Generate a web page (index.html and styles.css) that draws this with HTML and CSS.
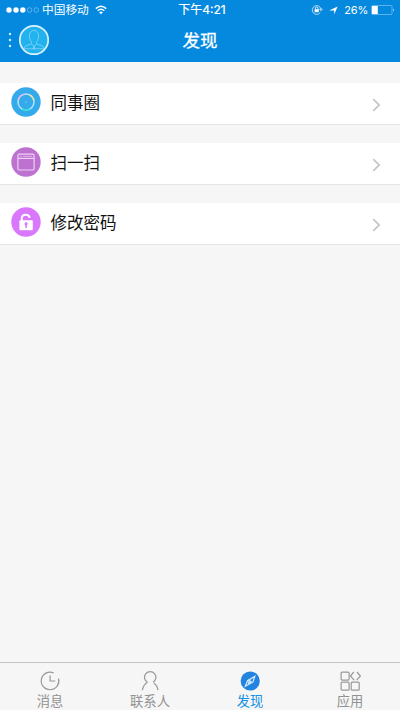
FILE: index.html
```html
<!DOCTYPE html>
<html lang="zh-CN">
<head>
<meta charset="utf-8">
<title>发现</title>
<link rel="stylesheet" href="styles.css">
</head>
<body>
<div class="app">
  <header class="header">
    <div class="status">
      <div class="status-left">
        <svg class="signal" width="34" height="8" viewBox="0 0 34 8"><g fill="#fff"><circle cx="3" cy="4" r="2.7"/><circle cx="10" cy="4" r="2.7"/><circle cx="16.8" cy="4" r="2.7"/></g><g fill="none" stroke="#7fc0f0" stroke-width=".7"><circle cx="23.6" cy="4" r="2.3"/><circle cx="30.3" cy="4" r="2.3"/></g></svg>
        <span class="carrier">中国移动</span>
        <svg class="wifi" width="12" height="10" viewBox="0 0 12 10"><g fill="none" stroke="#fff" stroke-width="1.5"><path d="M.8 3.6Q6-1 11.2 3.6"/><path d="M2.7 5.8Q6 2.8 9.3 5.8"/></g><path d="M4.2 7.3Q6 5.8 7.8 7.3L6 9.3z" fill="#fff"/></svg>
      </div>
      <span class="time">下午4:21</span>
      <div class="status-right">
        <svg width="12" height="12" viewBox="0 0 12 12"><path d="M9.3 8.5A4.4 4.4 0 1 1 10 5.2M8.6 5.1h2.8L10 6.8z" fill="none" stroke="#d6ecfb" stroke-width=".8"/><path d="M3.6 5.2h4.2v3H3.6z" fill="#fff"/><path d="M4.4 5.4V4.2a1.3 1.3 0 0 1 2.6 0v1.2" fill="none" stroke="#fff" stroke-width=".8"/></svg>
        <svg class="location" width="9" height="9" viewBox="0 0 9 9"><path d="M8.6.4L5.2 8.6V4.6L.2 4.4z" fill="#fff"/></svg>
        <span class="percent">26%</span>
        <svg class="battery" width="24" height="10" viewBox="0 0 24 10"><rect x=".5" y=".5" width="20.5" height="9" rx="1" fill="none" stroke="#75bdf0" stroke-width=".8"/><path d="M1 1h5.8v8H1z" fill="#fff"/><path d="M22 3.3q1.8 1.7 0 3.4z" fill="#b9def8"/></svg>
      </div>
    </div>
    <div class="navbar">
      <div class="profile">
        <svg width="4" height="16" viewBox="0 0 4 16" fill="#d5edff"><circle cx="2" cy="2" r="1.2"/><circle cx="2" cy="8" r="1.2"/><circle cx="2" cy="14" r="1.2"/></svg>
        <svg width="32" height="32" viewBox="0 0 32 32"><circle cx="16" cy="16" r="14.2" fill="#22b2ed" stroke="#d9f2ff" stroke-width="1.7"/><g fill="none" stroke="#86d4f7" stroke-width=".8"><path d="M13.4 17.8C10.5 15 10.4 6.4 16 6.4s5.5 8.6 2.6 11.4L18.5 20l5.2 1.6q2 .8 2.2 3.2H6.1q.2-2.4 2.2-3.2l5.2-1.6z"/><path d="M13.5 20l2.5 2.2 2.5-2.2M16 22.2l-1 2.6h2z"/></g></svg>
      </div>
      <h1 class="title">发现</h1>
    </div>
  </header>

  <main class="list">
    <a class="row">
      <svg class="row-icon" viewBox="0 0 30 30"><circle cx="15" cy="15" r="14.7" fill="#34aaea"/><g fill="none" stroke-width="1.5"><circle cx="15" cy="15" r="8" stroke="#b5e2ff"/><path d="M7.3 13A8 8 0 0 1 13 7.3" stroke="#e2b4f4"/><path d="M18.5 7.8a8 8 0 0 1 4.3 5.6" stroke="#e4e29b"/><path d="M19 21.9a8 8 0 0 1-8 0" stroke="#25e0d5"/></g><circle cx="15" cy="15" r="1" fill="#5cbff0"/></svg>
      <span class="label">同事圈</span>
      <svg class="chevron" viewBox="0 0 9 14"><path d="M1.2 1.2L7.2 7l-6 5.8"/></svg>
    </a>
    <a class="row">
      <svg class="row-icon" viewBox="0 0 30 30"><circle cx="15" cy="15" r="14.7" fill="#bd72cf"/><g fill="none" stroke="#f0cff6" stroke-width="1.2"><rect x="6.9" y="7.2" width="16.2" height="15.8" rx="1.5"/><path d="M7 11.4h16"/><path d="M9 9.3h2M12.2 9.3h9" stroke-width=".7"/></g></svg>
      <span class="label">扫一扫</span>
      <svg class="chevron" viewBox="0 0 9 14"><path d="M1.2 1.2L7.2 7l-6 5.8"/></svg>
    </a>
    <a class="row">
      <svg class="row-icon" viewBox="0 0 30 30"><circle cx="15" cy="15" r="14.7" fill="#d977fd"/><path d="M10.8 14v-2.7c0-4.8 7.4-4.8 7.8-.5" fill="none" stroke="#fff" stroke-width="2"/><rect x="8.4" y="13.2" width="13.4" height="10" rx="1" fill="#fff"/><path d="M15.1 15.2a1.6 1.6 0 0 1 .8 3v2.7h-1.6v-2.7a1.6 1.6 0 0 1 .8-3z" fill="#d977fd"/></svg>
      <span class="label">修改密码</span>
      <svg class="chevron" viewBox="0 0 9 14"><path d="M1.2 1.2L7.2 7l-6 5.8"/></svg>
    </a>
  </main>

  <nav class="tabs">
    <a class="tab">
      <svg viewBox="0 0 22 22"><path d="M14.6 2.9A8.8 8.8 0 1 0 19.5 8.6M11.1 5.4V11h5.2"/></svg>
      <span>消息</span>
    </a>
    <a class="tab">
      <svg viewBox="0 0 22 22"><path d="M8.4 12.3A5.7 5.7 0 1 1 14 12.3M8.6 12.2Q4 14.8 3.5 20.2M14.8 13Q18.4 15.6 19 20.2"/></svg>
      <span>联系人</span>
    </a>
    <a class="tab active">
      <svg viewBox="0 0 22 22"><circle cx="11.2" cy="11" r="9.6" fill="#2384df" stroke="none"/><path d="M15.8 6.4l-1.9 5.8-7.6 4.1 2.2-5.6z"/><path d="M10.2 10.2l2 1.7-2.6 1.5z"/></svg>
      <span>发现</span>
    </a>
    <a class="tab">
      <svg viewBox="0 0 22 22"><rect x="2.1" y="2.1" width="8" height="8" rx="1"/><rect x="2.1" y="12.2" width="8" height="8" rx="1"/><rect x="12.2" y="12.2" width="8" height="8" rx="1"/><path d="M14.8 2L11.4 6l3.8 4.1M18 2l3.4 4-3.8 4.1"/></svg>
      <span>应用</span>
    </a>
  </nav>
</div>
</body>
</html>
```
FILE: styles.css
```css
* { box-sizing: border-box; }

body {
  margin: 0;
  background: #f6f6f6;
  font-family: "Liberation Sans", "Noto Sans CJK SC", sans-serif;
}

svg { display: block; flex: none; }

.app {
  display: flex;
  flex-direction: column;
  height: 710px;
}

.header {
  height: 62px;
  background: #0589df;
  color: #fff;
}

.status {
  display: grid;
  grid-template-columns: 1fr auto 1fr;
  align-items: center;
  height: 20px;
  padding: 0 5px 0 6px;
  font-family: Inter, "Noto Sans CJK SC", sans-serif;
  font-size: 11.7px;
  line-height: 20px;
}

.status-left,
.status-right {
  display: flex;
  align-items: center;
}

.status-right { justify-content: flex-end; }
.carrier { margin-left: 2px; }
.wifi { margin-left: 6px; }
.time { margin-left: 3px; font-size: 12px; -webkit-text-stroke: 0.2px #fff; }
.location { margin-left: 6px; }
.percent { margin-left: 6px; font-size: 11px; letter-spacing: -0.2px; }
.battery { margin-left: 3px; }

.navbar {
  display: grid;
  grid-template-columns: 1fr auto 1fr;
  align-items: center;
  height: 40px;
}

.profile {
  display: flex;
  align-items: center;
  gap: 6px;
  padding-left: 8px;
}

.title {
  margin: 0;
  padding-top: 2px;
  font-size: 17.5px;
  font-weight: 400;
  line-height: 38px;
  -webkit-text-stroke: 0.3px #fff;
}

.list {
  flex: 1;
  display: flex;
  flex-direction: column;
  gap: 18px;
  padding-top: 21px;
}

.row {
  display: flex;
  align-items: center;
  height: 42px;
  padding: 0 19px 3px 11px;
  background: #fff;
  border-bottom: 1px solid #e5e5e5;
  color: #111;
}

.row-icon {
  width: 30px;
  height: 30px;
}

.label {
  flex: 1;
  margin-left: 9.5px;
  padding-top: 2px;
  font-size: 16.5px;
  line-height: 24px;
}

.chevron {
  width: 9px;
  height: 14px;
  margin-top: 5px;
  fill: none;
  stroke: #c8c8cc;
  stroke-width: 1.8;
}

.tabs {
  display: grid;
  grid-template-columns: repeat(4, 1fr);
  height: 48px;
  border-top: 1px solid #c3c3c3;
}

.tab {
  display: flex;
  flex-direction: column;
  align-items: center;
  padding-top: 7px;
  color: #929292;
  font-size: 13.3px;
  line-height: 20px;
}

.tab svg {
  width: 22px;
  height: 22px;
  fill: none;
  stroke: #999;
  stroke-width: 1.2;
}

.tab.active { color: #1691e5; }
.tab.active svg { stroke: #d7edff; }
```
